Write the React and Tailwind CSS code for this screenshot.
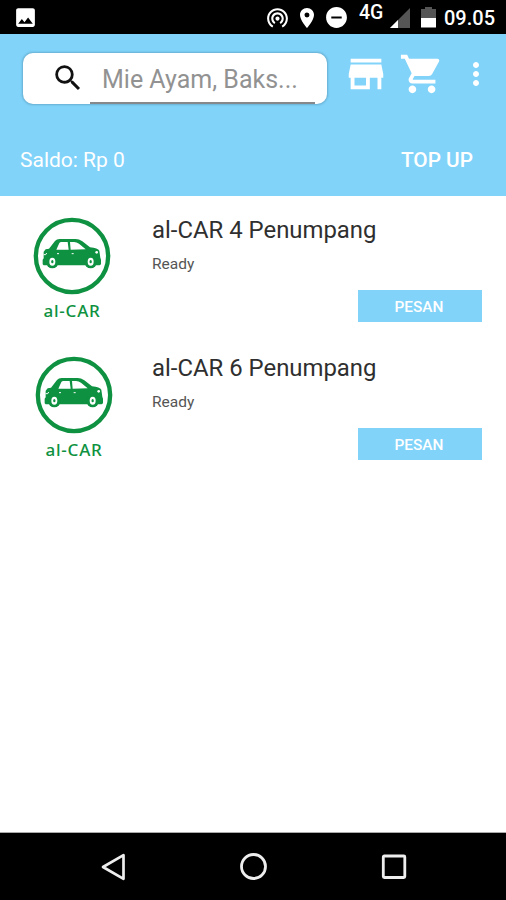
import {
  MdDoNotDisturbOn,
  MdImage,
  MdLocationOn,
  MdMoreVert,
  MdSearch,
  MdShoppingCart,
  MdStore,
  MdWifiTethering,
} from "react-icons/md";

const services = [
  { id: 1, name: "al-CAR 4 Penumpang", status: "Ready", className: "h-[138px]", logo: "ml-[33px]" },
  { id: 2, name: "al-CAR 6 Penumpang", status: "Ready", className: "h-[138px]", logo: "ml-[35px] mt-px" },
];

function StatusBar() {
  return (
    <div className="flex h-[34px] items-center bg-black pl-[13px] pr-[10px] text-white">
      <MdImage className="size-[25px]" />
      <div className="ml-auto flex h-full items-center">
        <MdWifiTethering className="size-[25px]" />
        <MdLocationOn className="ml-[5px] mt-px size-[24px]" />
        <MdDoNotDisturbOn className="ml-[5px] mt-px size-[25px]" />
        <span className="ml-[10px] -mt-[8px] w-[26px] text-[19.5px] font-medium leading-5">4G</span>
        <svg className="ml-[5px] mt-[2px] size-[20px]" viewBox="0 0 20 20">
          <path d="M20 0v20H0z" fill="#555" />
          <path d="M8 12v8H0z" fill="#fff" />
        </svg>
        <svg className="ml-[11px] h-[21px] w-[15px]" viewBox="0 0 15 21">
          <path d="M4 0h7v2h4v9H0V2h4z" fill="#555" />
          <path d="M0 11h15v9.5H0z" fill="#fff" />
        </svg>
        <span className="ml-[8px] mt-[2px] w-[52px] whitespace-nowrap text-[20px] font-medium leading-5">
          09.05
        </span>
      </div>
    </div>
  );
}

function Header() {
  return (
    <header className="h-[162px] bg-[#81d3fa] text-white">
      <div className="flex h-[80px] items-start pl-[23px]">
        {/* Search */}
        <div className="mt-[19px] flex h-[51px] w-[304px] rounded-[10px] bg-white pr-[12px] shadow-[0_0_2px_1px_rgba(70,130,160,0.45)]">
          <MdSearch className="ml-[28px] mt-[8px] size-[34px] shrink-0 text-[#111]" />
          <div className="ml-[5px] flex-1 border-b-2 border-[#85898c] pl-[12px] pt-[9px] text-[25px] leading-9 text-[#929292] whitespace-nowrap">
            Mie Ayam, Baks...
          </div>
        </div>
        <MdStore className="ml-[16px] mt-[17px] size-[46px] shrink-0" />
        <MdShoppingCart className="ml-[10px] mt-[17px] size-[46px] shrink-0" />
        <MdMoreVert className="ml-[13px] mt-[22px] size-[36px] shrink-0" />
      </div>
      {/* Balance */}
      <div className="flex items-center justify-between pl-[20px] pr-[33px] pt-[32px] text-[21px] leading-7">
        <span>Saldo: Rp 0</span>
        <button className="text-[20.8px] font-medium">TOP UP</button>
      </div>
    </header>
  );
}

function CarLogo({ className }) {
  return (
    <div className={`${className} w-[78px] shrink-0 pt-[21px] text-[#0e9140]`}>
      <svg className="size-[78px]" viewBox="40 36 234 234">
        <circle cx="157" cy="153" r="108.5" fill="#fff" stroke="currentColor" strokeWidth="13" />
        <path
          d="M69 178V164L72 160V140L78 133L88 131L106 108Q111 102 120 102H168Q178 102 188 109L211 127Q235 130 239 137L242 158L244 164V178L240 181H72Z"
          fill="currentColor"
        />
        <path d="M110 134L119 114Q121 111 125 111H144L147 134ZM153 134L151 111H163Q171 111 178 116L198 133Z" fill="#fff" />
        <path d="M72 149H78L81 144M112 146H118M156 146H162" fill="none" stroke="#fff" strokeWidth="3" />
        <circle cx="231" cy="142" r="4" fill="#fff" />
        {[98, 213].map((cx) => (
          <g key={cx}>
            <circle cx={cx} cy="171" r="19" fill="currentColor" />
            <ellipse cx={cx} cy="170" rx="9" ry="12" fill="#fff" />
            <ellipse cx={cx} cy="170" rx="3.5" ry="5" fill="currentColor" />
          </g>
        ))}
      </svg>
      <div className="mt-[4px] whitespace-nowrap text-center font-['Noto_Sans'] text-[17px] font-medium leading-6 tracking-[0.8px]">
        al-CAR
      </div>
    </div>
  );
}

function ServiceItem({ service }) {
  return (
    <div className={`${service.className} flex`}>
      <CarLogo className={service.logo} />
      <div className="ml-auto flex w-[354px] flex-col pr-[24px] pt-[18px]">
        <h2 className="text-[23.9px] leading-8 text-[#2f2f2f]">{service.name}</h2>
        <p className="mt-[8px] text-[15.5px] leading-5 text-[#555]">{service.status}</p>
        <button className="mt-[16px] h-[32px] w-[124px] self-end bg-[#81d3fa] pr-[2px] pt-[2px] text-[15.4px] font-medium leading-5 text-white">
          PESAN
        </button>
      </div>
    </div>
  );
}

function NavBar() {
  return (
    <nav className="flex h-[68px] items-center justify-between border-t border-[#aaa] bg-black pl-[100px] pr-[98px]">
      <svg className="size-[28px]" viewBox="0 0 28 28" fill="none" stroke="#eee" strokeWidth="2.7">
        <path d="M23.5 2.2v23.6L3 14z" strokeLinejoin="round" />
      </svg>
      <svg className="size-[28px]" viewBox="0 0 28 28" fill="none" stroke="#eee" strokeWidth="2.8">
        <circle cx="13.5" cy="13.5" r="12" />
      </svg>
      <svg className="size-[28px]" viewBox="0 0 28 28" fill="none" stroke="#eee" strokeWidth="2.8">
        <rect x="3.3" y="3" width="21.5" height="21.5" rx="1" />
      </svg>
    </nav>
  );
}

export default function App() {
  return (
    <div className="flex h-[900px] w-[506px] flex-col overflow-hidden bg-white font-[Roboto,sans-serif]">
      <StatusBar />
      <Header />
      <main className="flex-1">
        {services.map((service) => (
          <ServiceItem key={service.id} service={service} />
        ))}
      </main>
      <NavBar />
    </div>
  );
}
